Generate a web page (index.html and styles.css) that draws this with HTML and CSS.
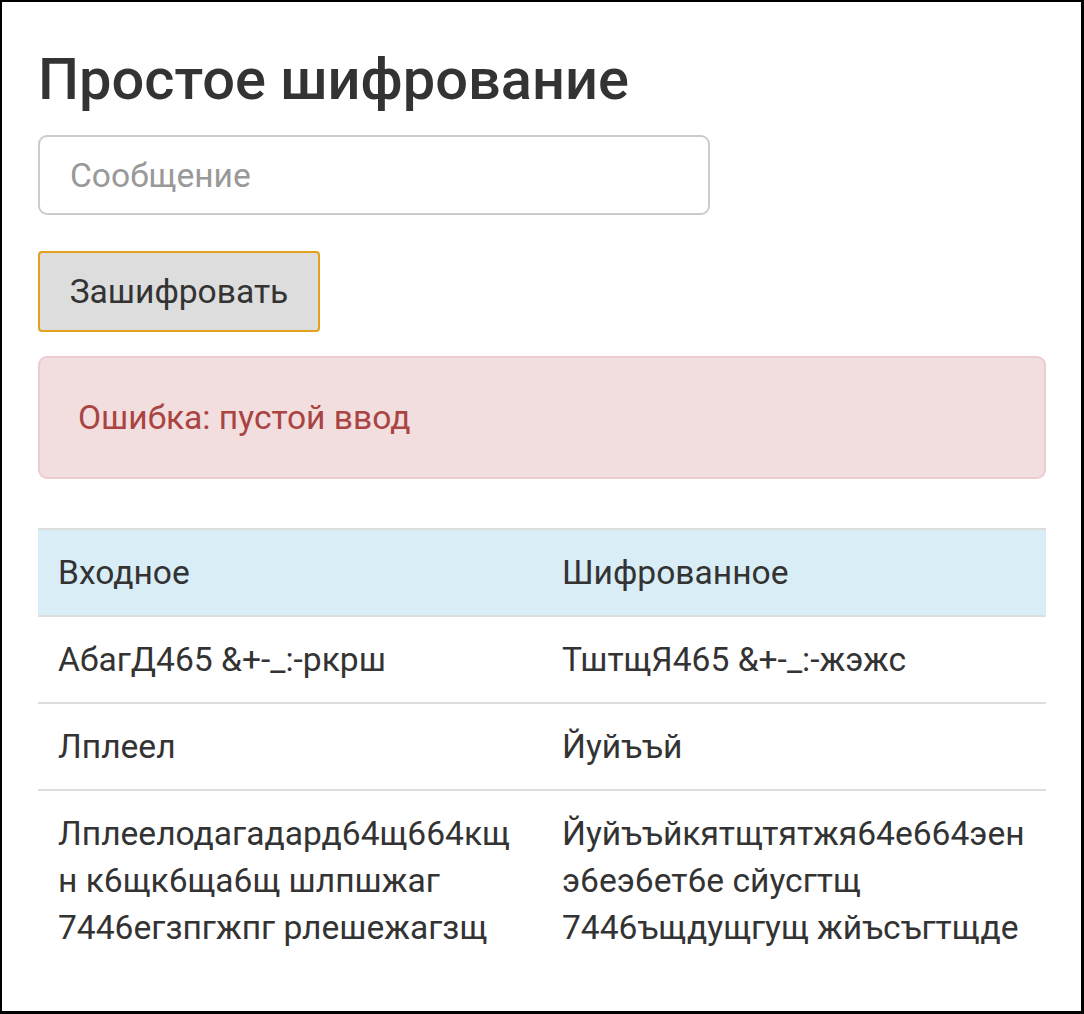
FILE: index.html
```html
<!DOCTYPE html>
<html lang="ru">
<head>
<meta charset="utf-8">
<title>Простое шифрование</title>
<link rel="stylesheet" href="styles.css">
</head>
<body>
<div class="frame">
  <h1 class="title">Простое шифрование</h1>
  <input class="field" type="text" placeholder="Сообщение">
  <div class="actions">
    <button class="btn" type="button">Зашифровать</button>
  </div>
  <div class="alert">Ошибка: пустой ввод</div>
  <table class="table">
    <tbody>
      <tr class="info">
        <td>Входное</td>
        <td>Шифрованное</td>
      </tr>
      <tr>
        <td>АбагД465 &amp;+-_:-ркрш</td>
        <td>ТштщЯ465 &amp;+-_:-жэжс</td>
      </tr>
      <tr>
        <td>Лплеел</td>
        <td>Йуйъъй</td>
      </tr>
      <tr>
        <td>Лплеелодагадард64щ664кщн к6щк6ща6щ шлпшжаг 7446егзпгжпг рлешежагзщ</td>
        <td>Йуйъъйкятщтятжя64е664эен э6еэ6ет6е сйусгтщ 7446ъщдущгущ жйъсъгтщде</td>
      </tr>
    </tbody>
  </table>
</div>
</body>
</html>
```

FILE: styles.css
```css
* { box-sizing: border-box; }
html, body { margin: 0; padding: 0; background: #fff; }
body {
  font-family: Roboto, "Liberation Sans", sans-serif;
  font-size: 33.6px;
  line-height: 47px;
  color: #333;
}
.frame {
  width: 1084px;
  height: 1014px;
  border: 2px solid #000;
  border-right-width: 3px;
  border-bottom-width: 3px;
  padding: 0 35px 0 36px;
  overflow: hidden;
}
.title {
  font-size: 57.8px;
  font-weight: 500;
  line-height: 62px;
  margin: 46px 0 25px;
  color: #333;
}
.field {
  display: block;
  width: 672px;
  height: 80px;
  border: 2px solid #ccc;
  border-radius: 9px;
  padding: 0 30px;
  font: inherit;
  color: #555;
  background: #fff;
  outline: none;
}
.field::placeholder { color: #999; }
.actions { margin-top: 36px; }
.btn {
  display: block;
  width: 282px;
  height: 81px;
  background: #dddddd;
  border: 2px solid #e2a220;
  border-radius: 4px;
  font: inherit;
  color: #333;
  padding: 0 20px;
}
.alert {
  margin-top: 24px;
  height: 123px;
  background: #f2dede;
  border: 2px solid #ebccd1;
  border-radius: 9px;
  color: #a94442;
  padding: 36px 38px;
}
.table {
  margin-top: 49px;
  width: 100%;
  border-collapse: collapse;
  table-layout: fixed;
}
.table td {
  width: 50%;
  padding: 19px 20px;
  border-top: 2px solid #ddd;
  vertical-align: top;
  overflow-wrap: anywhere;
}
.table tr.info td { background: #d9edf7; }
```
